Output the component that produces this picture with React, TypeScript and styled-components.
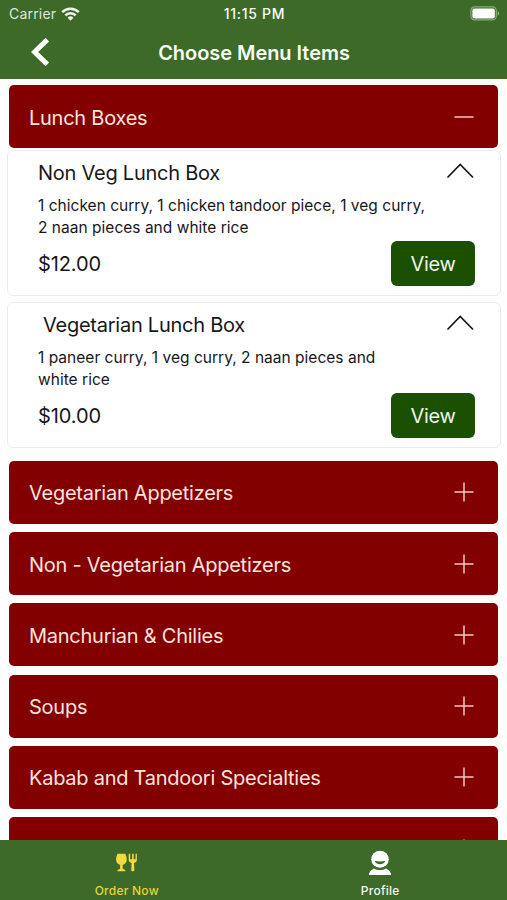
import React, { useState } from "react";
import styled, { createGlobalStyle } from "styled-components";

const GlobalStyle = createGlobalStyle`
  * { box-sizing: border-box; }
  body { margin: 0; background: #fefefe; }
  button { font: inherit; letter-spacing: inherit; border: 0; padding: 0; background: none; cursor: pointer; }
`;

const Screen = styled.div`
  width: 507px;
  height: 900px;
  display: flex;
  flex-direction: column;
  overflow: hidden;
  background: #fefefe;
  font-family: Inter, "Liberation Sans", sans-serif;
  color: #17171a;
`;

const Header = styled.header`
  flex: none;
  height: 79px;
  background: #3d6a29;
  color: #f6fbf3;
`;

const StatusBar = styled.div`
  display: grid;
  grid-template-columns: 1fr auto 1fr;
  align-items: center;
  height: 27px;
  padding: 0 7px 0 9px;
  line-height: 27px;
`;

const Carrier = styled.div`
  display: flex;
  align-items: center;
  gap: 5px;
  font-size: 14px;
  letter-spacing: 0.2px;
  color: #dce8d6;
`;

const Clock = styled.div`
  font-size: 14px;
  font-weight: 550;
  letter-spacing: 0.7px;
`;

const Battery = styled.svg`
  justify-self: end;
`;

const TitleBar = styled.div`
  display: grid;
  grid-template-columns: 80px 1fr 80px;
  align-items: center;
  height: 50px;
`;

const BackButton = styled.button`
  display: flex;
  padding-left: 30px;
`;

const Title = styled.h1`
  margin: 0;
  padding: 1px 0 0 1px;
  text-align: center;
  font-size: 20px;
  font-weight: 600;
  line-height: 26px;
  letter-spacing: -0.05px;
`;

const Content = styled.main`
  flex: 1;
  min-height: 0;
  overflow: hidden;
  padding-top: 6px;
`;

const Section = styled.section`
  margin-bottom: 8.25px;
`;

const SectionHeader = styled.button`
  display: flex;
  align-items: center;
  justify-content: space-between;
  width: 489px;
  height: 63px;
  margin-left: 9.4px;
  padding: 2px 24.4px 0 19.6px;
  border-radius: 5px;
  background: #830000;
  color: #fae3de;
  font-size: 20px;
  line-height: 26px;
  letter-spacing: -0.25px;
`;

const ToggleIcon = styled.svg`
  flex: none;
  margin-top: -2px;
`;

const Dishes = styled.div`
  display: flex;
  flex-direction: column;
  gap: 6px;
  padding: 2px 6px 4.5px 7px;
`;

const DishCard = styled.article`
  height: 146px;
  padding: 9px 25px 7px 30px;
  border: 1px solid #ececee;
  border-radius: 6px;
  background: #fff;
`;

const DishTop = styled.div`
  display: flex;
  justify-content: space-between;
  height: 35px;
`;

const DishName = styled.h2<{ $indent?: number }>`
  margin: 0;
  padding-left: ${(p) => p.$indent ?? 0}px;
  font-size: 20px;
  font-weight: 400;
  line-height: 26px;
  letter-spacing: -0.25px;
`;

const Chevron = styled.svg`
  margin: 2px 1px 0 0;
`;

const Description = styled.p`
  margin: 0;
  width: 400px;
  height: 44px;
  font-size: 15.5px;
  line-height: 22px;
  letter-spacing: 0.02px;
  white-space: pre-line;
`;

const DishBottom = styled.div`
  display: flex;
  align-items: center;
  justify-content: space-between;
  height: 49px;
`;

const Price = styled.span`
  font-size: 20px;
  letter-spacing: -0.1px;
`;

const ViewButton = styled.button`
  width: 84px;
  height: 45px;
  border-radius: 6px;
  background: #1b5000;
  color: #eef5ea;
  font-size: 20px;
  letter-spacing: -0.3px;
`;

const TabBar = styled.nav`
  flex: none;
  display: grid;
  grid-template-columns: 1fr 1fr;
  height: 60px;
  background: #3d6a29;
`;

const Tab = styled.button<{ $active?: boolean }>`
  display: flex;
  flex-direction: column;
  align-items: center;
  justify-content: space-between;
  padding: 10px 0 1px;
  color: ${(p) => (p.$active ? "#e9d338" : "#f3f8f0")};
  font-size: 12px;
  font-weight: 500;
  line-height: 16px;
  letter-spacing: 0.25px;
`;

type Dish = { name: string; indent?: number; description: string; price: string };
type MenuSection = { title: string; dishes: Dish[] };

const menu: MenuSection[] = [
  {
    title: "Lunch Boxes",
    dishes: [
      {
        name: "Non Veg Lunch Box",
        description: "1 chicken curry, 1 chicken tandoor piece, 1 veg curry,\n2 naan pieces and white rice",
        price: "$12.00",
      },
      {
        name: "Vegetarian Lunch Box",
        indent: 5,
        description: "1 paneer curry, 1 veg curry, 2 naan pieces and\nwhite rice",
        price: "$10.00",
      },
    ],
  },
  { title: "Vegetarian Appetizers", dishes: [] },
  { title: "Non - Vegetarian Appetizers", dishes: [] },
  { title: "Manchurian & Chilies", dishes: [] },
  { title: "Soups", dishes: [] },
  { title: "Kabab and Tandoori Specialties", dishes: [] },
  { title: "", dishes: [] },
];

const WifiIcon = () => (
  <svg width="19" height="14" viewBox="0 0 19 14" fill="none" stroke="#f1f7ee" strokeWidth="2.6">
    <path d="M1.2 5.1a11.8 11.8 0 0 1 16.6 0" />
    <path d="M4.3 8.4a7.3 7.3 0 0 1 10.4 0" />
    <path d="M9.5 13.8 6.6 10.8a4.1 4.1 0 0 1 5.8 0z" fill="#f1f7ee" stroke="none" />
  </svg>
);

const BatteryIcon = () => (
  <Battery width="30" height="15" viewBox="0 0 30 15">
    <rect x="0.9" y="0.9" width="25.4" height="13" rx="3.8" fill="none" stroke="#8ca97f" strokeWidth="1.2" />
    <rect x="2.4" y="2.4" width="22.4" height="10" rx="2" fill="#fff" />
    <path d="M27.7 5.2v4.5c2.1-.8 2.1-3.7 0-4.5z" fill="#8ca97f" />
  </Battery>
);

const GobletForkIcon = () => (
  <svg width="23" height="24" viewBox="0 0 23 24" fill="#f4da3c">
    <path d="M2.600 3.800h7.600c1 1.800 1.500 3.800 1.500 6 0 2.700-1.500 4.600-4 5v4.200c1.700.2 2.700.9 2.700 2.200H2.400c0-1.300 1-2 2.700-2.200v-4.200c-2.500-.4-4-2.300-4-5 0-2.200.5-4.200 1.500-6z" />
    <path d="M13.700 3.800v6c0 1.700 1.100 2.700 2.900 3.100l-.4 7.100c0 1.700 3.200 1.700 3.200 0l-.4-7.100c1.800-.4 2.900-1.400 2.900-3.100v-6h-1.400v5.500h-1.800V3.800h-1.600v5.500h-1.900V3.800z" />
  </svg>
);

const ProfileIcon = () => (
  <svg width="24" height="26" viewBox="0 0 24 26">
    <ellipse cx="12" cy="9.2" rx="8.8" ry="8.500" fill="#fff" />
    <path d="M6.700 10.800c3 .8 7.600.8 10.600 0-.6 2.300-2.700 3.500-5.300 3.500s-4.700-1.200-5.300-3.500z" fill="#3d6a29" />
    <path d="M.8 25c.3-3 2-5 5.200-6.600 3.600 2 8.400 2 12 0 3.200 1.600 4.900 3.600 5.200 6.600z" fill="#fff" />
  </svg>
);

export default function App() {
  const [open, setOpen] = useState<number | null>(0);

  return (
    <>
      <GlobalStyle />
      <Screen>
        <Header>
          <StatusBar>
            <Carrier>
              Carrier
              <WifiIcon />
            </Carrier>
            <Clock>11:15 PM</Clock>
            <BatteryIcon />
          </StatusBar>
          <TitleBar>
            <BackButton aria-label="Back">
              <svg width="20" height="30" viewBox="0 0 20 30" fill="none" stroke="#fff" strokeWidth="5">
                <path d="M17.300 2.600 4.600 15l12.700 12.400" />
              </svg>
            </BackButton>
            <Title>Choose Menu Items</Title>
          </TitleBar>
        </Header>
        <Content>
          {menu.map((section, i) => (
            <Section key={i}>
              <SectionHeader onClick={() => setOpen(open === i ? null : i)}>
                <span>{section.title}</span>
                <ToggleIcon width="20" height="20" viewBox="0 0 20 20" stroke="#f1c9c5" strokeWidth="1.5">
                  <path d={open === i ? "M.5 10h19" : "M.5 10h19M10 .5v19"} />
                </ToggleIcon>
              </SectionHeader>
              {open === i && section.dishes.length > 0 && (
                <Dishes>
                  {section.dishes.map((dish) => (
                    <DishCard key={dish.name}>
                      <DishTop>
                        <DishName $indent={dish.indent}>{dish.name}</DishName>
                        <Chevron width="28" height="17" viewBox="0 0 28 17" fill="none" stroke="#151515" strokeWidth="1.7">
                          <path d="M1.500 15.500 14.200 2.500 27 15.500" />
                        </Chevron>
                      </DishTop>
                      <Description>{dish.description}</Description>
                      <DishBottom>
                        <Price>{dish.price}</Price>
                        <ViewButton>View</ViewButton>
                      </DishBottom>
                    </DishCard>
                  ))}
                </Dishes>
              )}
            </Section>
          ))}
        </Content>
        <TabBar>
          <Tab $active>
            <GobletForkIcon />
            Order Now
          </Tab>
          <Tab>
            <ProfileIcon />
            Profile
          </Tab>
        </TabBar>
      </Screen>
    </>
  );
}
